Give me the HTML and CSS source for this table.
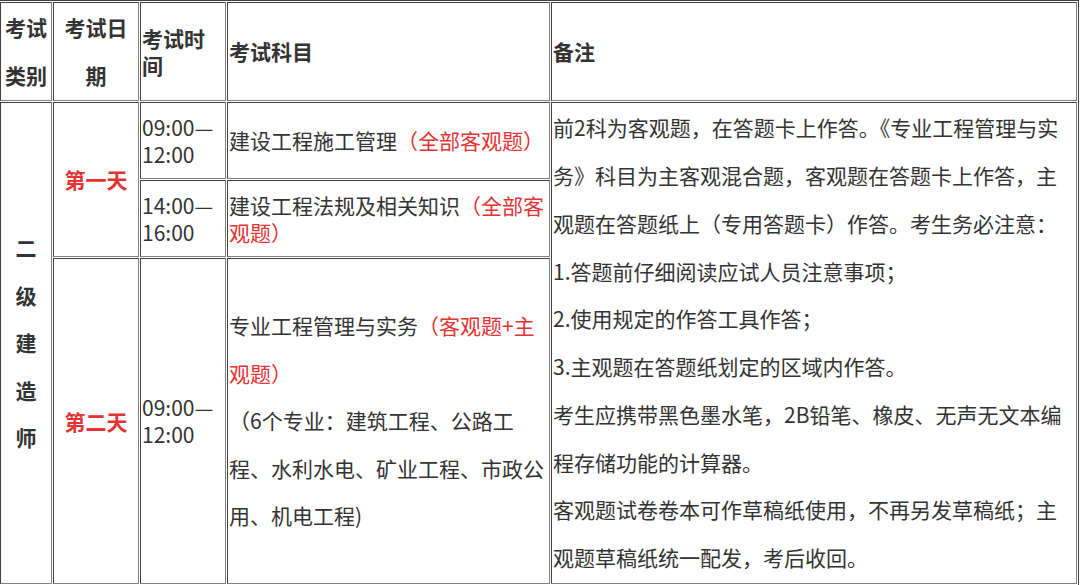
FILE: index.html
```html
<!DOCTYPE html>
<html lang="zh-CN">
<head>
<meta charset="utf-8">
<title>考试安排</title>
<link rel="stylesheet" href="styles.css">
</head>
<body>
<table class="exam">
  <tr class="row-head">
    <td class="w1 center bold tall">考试类别</td>
    <td class="w2 center bold tall">考试日期</td>
    <td class="w3 bold">考试时间</td>
    <td class="w4 bold">考试科目</td>
    <td class="w5 bold">备注</td>
  </tr>
  <tr class="row-a">
    <td class="center bold tall" rowspan="3">二<br>级<br>建<br>造<br>师</td>
    <td class="center bold red" rowspan="2">第一天</td>
    <td>09:00—12:00</td>
    <td>建设工程施工管理<span class="red">（全部客观题）</span></td>
    <td class="notes" rowspan="3">前2科为客观题，在答题卡上作答。《专业工程管理与实务》科目为主客观混合题，客观题在答题卡上作答，主观题在答题纸上（专用答题卡）作答。考生务必注意：<br>1.答题前仔细阅读应试人员注意事项；<br>2.使用规定的作答工具作答；<br>3.主观题在答题纸划定的区域内作答。<br>考生应携带黑色墨水笔，2B铅笔、橡皮、无声无文本编程存储功能的计算器。<br>客观题试卷卷本可作草稿纸使用，不再另发草稿纸；主观题草稿纸统一配发，考后收回。</td>
  </tr>
  <tr class="row-b">
    <td>14:00—16:00</td>
    <td>建设工程法规及相关知识<span class="red">（全部客观题）</span></td>
  </tr>
  <tr class="row-c">
    <td class="center bold red">第二天</td>
    <td>09:00—12:00</td>
    <td class="tall">专业工程管理与实务<span class="red">（客观题+主观题）</span><br>（6个专业：建筑工程、公路工程、水利水电、矿业工程、市政公用、机电工程)</td>
  </tr>
</table>
</body>
</html>
```

FILE: styles.css
```css
html, body {
  margin: 0;
  padding: 0;
  background: #ffffff;
}

body {
  font-family: "Noto Sans CJK SC", "Noto Sans", sans-serif;
  font-size: 21px;
  color: #333333;
}

.exam {
  border-collapse: separate;
  border-spacing: 1px;
  table-layout: fixed;
  width: 1081px;
  margin-left: -2px;
  border: 1px solid;
  border-color: #404040 #404040 #404040 #808080;
}

.exam td {
  border: 1px solid;
  border-color: #404040 #808080 #808080 #404040;
  padding: 1px;
  vertical-align: middle;
  text-align: left;
  line-height: 27px;
}

.w1 { width: 48px; }
.w2 { width: 82px; }
.w3 { width: 82px; }
.w4 { width: 319px; }
.w5 { width: 522px; }

.row-head { height: 99px; }
.row-a { height: 77px; }
.row-b { height: 77px; }
.row-c { height: 326px; }

.exam td.center { text-align: center; }
.bold { font-weight: bold; }
.red { color: #e53333; }
.exam td.tall { line-height: 47.5px; }
.exam td.notes { line-height: 47.75px; }
```
